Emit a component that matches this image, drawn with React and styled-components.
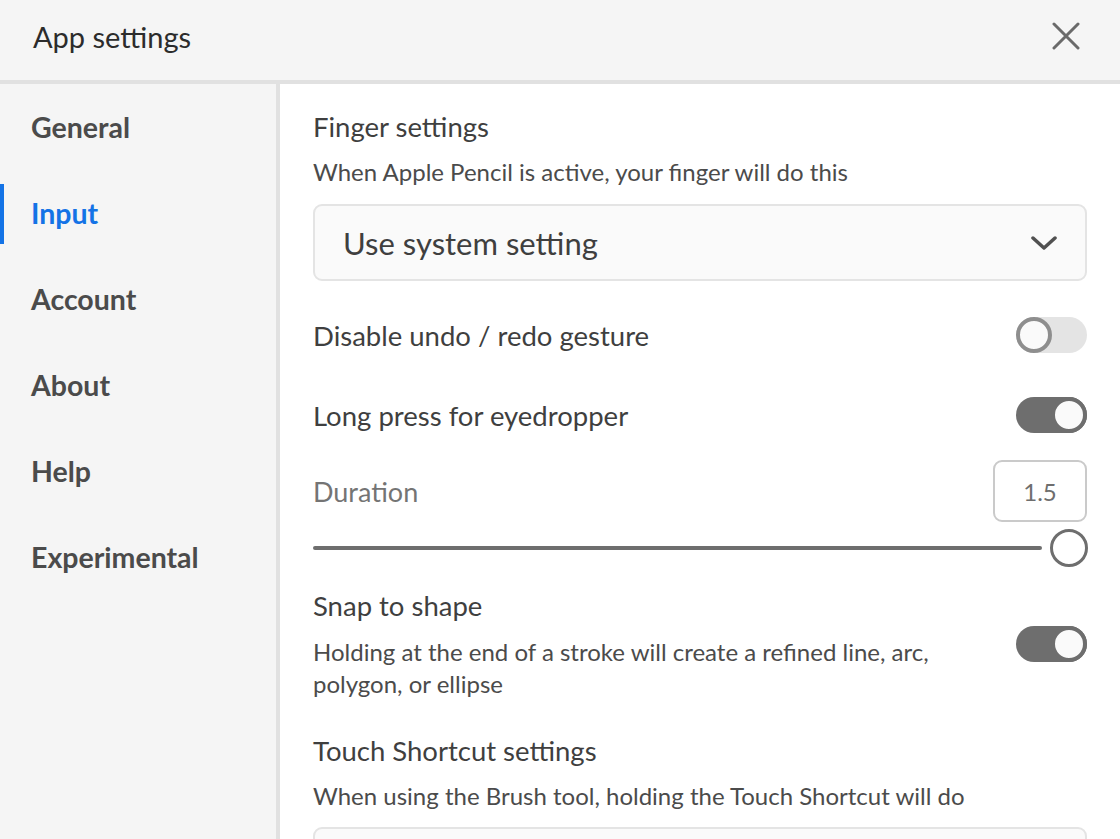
import React from "react";
import styled, { createGlobalStyle } from "styled-components";

const GlobalStyle = createGlobalStyle`
  html, body {
    margin: 0;
    padding: 0;
    background: #ffffff;
  }
  body {
    font-family: Lato, "Noto Sans", sans-serif;
    color: #4b4b4b;
    overflow: hidden;
  }
  * {
    box-sizing: border-box;
  }
`;

const Page = styled.div`
  width: 1120px;
  height: 839px;
  display: flex;
  flex-direction: column;
  overflow: hidden;
`;

const Header = styled.header`
  height: 84px;
  flex-shrink: 0;
  display: flex;
  align-items: center;
  justify-content: space-between;
  padding: 0 40px 8px 33px;
  background: #f5f5f5;
  border-bottom: 4px solid #e1e1e1;
`;

const Title = styled.h1`
  margin: 0;
  font-size: 29px;
  font-weight: 400;
  color: #2c2c2c;
`;

const CloseButton = styled.button`
  border: 0;
  background: none;
  padding: 0;
  width: 28px;
  height: 28px;
  display: flex;
  align-items: center;
  justify-content: center;
`;

const Body = styled.div`
  flex: 1;
  display: flex;
  min-height: 0;
`;

const Sidebar = styled.nav`
  width: 280px;
  flex-shrink: 0;
  background: #f5f5f5;
  border-right: 4px solid #e1e1e1;
  padding-top: 0;
`;

const NavItem = styled.div`
  position: relative;
  height: 86px;
  display: flex;
  align-items: center;
  padding-left: 31px;
  font-size: 28.5px;
  font-weight: 700;
  color: ${({ active }) => (active ? "#1473e6" : "#4b4b4b")};

  &::before {
    content: "";
    display: ${({ active }) => (active ? "block" : "none")};
    position: absolute;
    left: 0;
    top: 14px;
    width: 4px;
    height: 60px;
    background: #1473e6;
  }
`;

const Content = styled.main`
  flex: 1;
  padding: 26px 33px 0;
  overflow: hidden;
`;

const Heading = styled.h2`
  margin: ${({ top }) => top || 0}px 0 0;
  font-size: 27.5px;
  line-height: 34px;
  font-weight: 400;
  color: #3f3f3f;
`;

const Description = styled.p`
  margin: 13px 0 0;
  font-size: 24px;
  line-height: ${({ lh }) => lh || 30}px;
  color: #4b4b4b;
`;

const Picker = styled.div`
  margin-top: ${({ top }) => top}px;
  height: 77px;
  display: flex;
  align-items: center;
  justify-content: space-between;
  padding: 0 28px 0 28px;
  background: #fafafa;
  border: 2px solid #e4e4e4;
  border-radius: 9px;
  font-size: 31px;
  color: #3f3f3f;
  flex-shrink: 0;
`;

const Row = styled.div`
  display: flex;
  align-items: center;
  justify-content: space-between;
  min-height: ${({ h }) => h || 80}px;
  margin-top: ${({ top }) => top || 0}px;
`;

const Label = styled.span`
  font-size: ${({ muted }) => (muted ? 27 : 27.5)}px;
  color: ${({ muted }) => (muted ? "#747474" : "#3f3f3f")};
`;

const Track = styled.div`
  position: relative;
  width: 71px;
  height: 36px;
  border-radius: 18px;
  background: ${({ on }) => (on ? "#6e6e6e" : "#e4e4e4")};
  flex-shrink: 0;
`;

const Knob = styled.div`
  position: absolute;
  top: 0;
  left: ${({ on }) => (on ? "35px" : "0")};
  width: 36px;
  height: 36px;
  border-radius: 50%;
  background: #fafafa;
  border: 4px solid ${({ on }) => (on ? "#6e6e6e" : "#8e8e8e")};
`;

const NumberBox = styled.div`
  width: 94px;
  height: 62px;
  display: flex;
  align-items: center;
  justify-content: center;
  border: 2px solid #cacaca;
  border-radius: 9px;
  font-size: 24px;
  color: #6e6e6e;
`;

const Slider = styled.div`
  margin-top: 8px;
  height: 36px;
  display: flex;
  align-items: center;
  gap: 8px;
`;

const SliderBar = styled.div`
  flex: 1;
  height: 4px;
  border-radius: 2px;
  background: #6e6e6e;
`;

const SliderThumb = styled.div`
  width: 38px;
  height: 38px;
  margin-right: -1px;
  border-radius: 50%;
  background: #ffffff;
  border: 3px solid #6e6e6e;
  flex-shrink: 0;
`;

const SettingText = styled.div`
  max-width: 680px;
`;

const Switch = ({ on }) => (
  <Track on={on ? 1 : 0}>
    <Knob on={on ? 1 : 0} />
  </Track>
);

const navItems = ["General", "Input", "Account", "About", "Help", "Experimental"];

export default function App() {
  return (
    <>
      <GlobalStyle />
      <Page>
        <Header>
          <Title>App settings</Title>
          <CloseButton aria-label="Close">
            <svg width="28" height="28" viewBox="0 0 28 28">
              <path
                d="M2 2 L26 26 M26 2 L2 26"
                stroke="#6a6a6a"
                strokeWidth="3"
                strokeLinecap="round"
              />
            </svg>
          </CloseButton>
        </Header>
        <Body>
          <Sidebar>
            {navItems.map((item) => (
              <NavItem key={item} active={item === "Input" ? 1 : 0}>
                {item}
              </NavItem>
            ))}
          </Sidebar>
          <Content>
            <Heading>Finger settings</Heading>
            <Description>When Apple Pencil is active, your finger will do this</Description>
            <Picker top={17}>
              <span>Use system setting</span>
              <svg width="26" height="16" viewBox="0 0 26 16">
                <path
                  d="M2 3 L13 13 L24 3"
                  fill="none"
                  stroke="#505050"
                  strokeWidth="3.5"
                  strokeLinecap="round"
                  strokeLinejoin="round"
                />
              </svg>
            </Picker>
            <Row top={14}>
              <Label>Disable undo / redo gesture</Label>
              <Switch />
            </Row>
            <Row>
              <Label>Long press for eyedropper</Label>
              <Switch on />
            </Row>
            <Row top={5} h={62}>
              <Label muted>Duration</Label>
              <NumberBox>1.5</NumberBox>
            </Row>
            <Slider>
              <SliderBar />
              <SliderThumb />
            </Slider>
            <Row top={22} h={112}>
              <SettingText>
                <Heading>Snap to shape</Heading>
                <Description lh={32}>
                  Holding at the end of a stroke will create a refined line, arc, polygon, or ellipse
                </Description>
              </SettingText>
              <Switch on />
            </Row>
            <Heading top={34}>Touch Shortcut settings</Heading>
            <Description>When using the Brush tool, holding the Touch Shortcut will do</Description>
            <Picker top={16} />
          </Content>
        </Body>
      </Page>
    </>
  );
}
